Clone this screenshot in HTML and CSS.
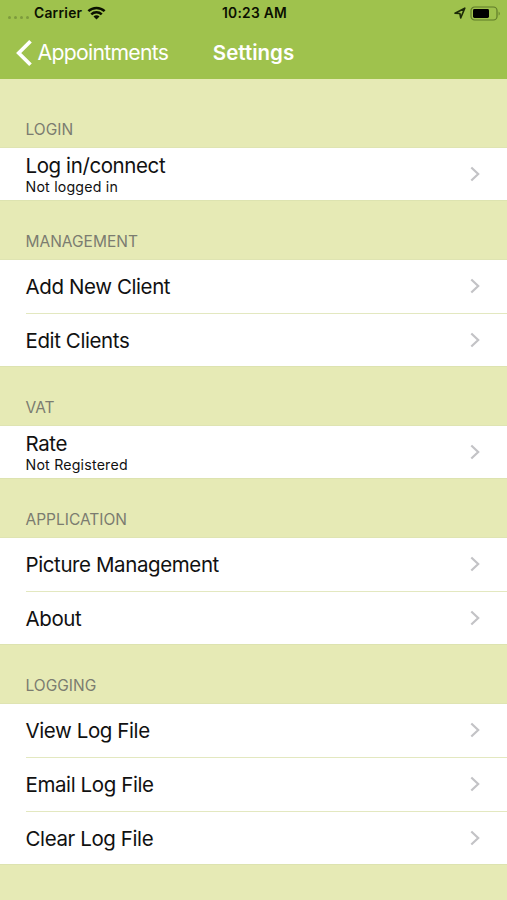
FILE: index.html
```html
<!DOCTYPE html>
<html lang="en">
<head>
    <meta charset="UTF-8">
    <title>Settings</title>
    <link rel="stylesheet" href="styles.css">
</head>
<body>
    <svg class="defs">
        <symbol id="chevron" viewBox="0 0 10 16">
            <path d="M1.3 1.5 8.2 8 1.3 14.5" fill="none" stroke="#c3c3c6" stroke-width="2.2"/>
        </symbol>
    </svg>
    <header>
        <div class="status">
            <div class="carrier">
                <span class="signal"><i></i><i></i><i></i><i></i></span>
                <span class="carrier-name">Carrier</span>
                <svg class="wifi" width="19" height="14" viewBox="0 0 20 15">
                    <g fill="none" stroke="#0b1000" stroke-width="2.7">
                        <path d="M1.3 5.6a12.4 12.4 0 0 1 17.4 0"/>
                        <path d="M4.4 8.9a8 8 0 0 1 11.2 0"/>
                    </g>
                    <path d="M6.8 11.2a4.5 4.5 0 0 1 6.4 0L10 14.4z" fill="#0b1000"/>
                </svg>
            </div>
            <div class="time">10:23 AM</div>
            <div class="power">
                <svg width="12" height="12" viewBox="0 0 12 12">
                    <path d="M1 6.3 10.8 1.2 6.7 10.9 5.9 6.5z" fill="none" stroke="#1c2a08" stroke-width="1.6" stroke-linejoin="round"/>
                </svg>
                <svg width="31" height="15" viewBox="0 0 31 15">
                    <rect x="1" y="1" width="26" height="13" rx="3.6" fill="none" stroke="#5f7a29" stroke-width="1.2"/>
                    <rect x="3" y="3" width="16" height="9" rx="1.4" fill="#000"/>
                    <path d="M28.7 5.4q2 2.1 0 4.2z" fill="#5f7a29"/>
                </svg>
            </div>
        </div>
        <nav>
            <a class="back">
                <svg width="17" height="28" viewBox="0 0 17 28">
                    <path d="M15.5 2.2 3.7 14l11.8 11.8" fill="none" stroke="#fff" stroke-width="3.7"/>
                </svg>
                <span>Appointments</span>
            </a>
            <h1>Settings</h1>
        </nav>
    </header>
    <main>
        <h2 class="first">LOGIN</h2>
        <ul>
            <li class="detail"><div><p>Log in/connect</p><small>Not logged in</small></div><svg class="chevron"><use href="#chevron"/></svg></li>
        </ul>
        <h2>MANAGEMENT</h2>
        <ul>
            <li><p>Add New Client</p><svg class="chevron"><use href="#chevron"/></svg></li>
            <li><p>Edit Clients</p><svg class="chevron"><use href="#chevron"/></svg></li>
        </ul>
        <h2>VAT</h2>
        <ul>
            <li class="detail"><div><p>Rate</p><small>Not Registered</small></div><svg class="chevron"><use href="#chevron"/></svg></li>
        </ul>
        <h2>APPLICATION</h2>
        <ul>
            <li><p>Picture Management</p><svg class="chevron"><use href="#chevron"/></svg></li>
            <li><p>About</p><svg class="chevron"><use href="#chevron"/></svg></li>
        </ul>
        <h2>LOGGING</h2>
        <ul>
            <li><p>View Log File</p><svg class="chevron"><use href="#chevron"/></svg></li>
            <li><p>Email Log File</p><svg class="chevron"><use href="#chevron"/></svg></li>
            <li><p>Clear Log File</p><svg class="chevron"><use href="#chevron"/></svg></li>
        </ul>
    </main>
</body>
</html>
```
FILE: styles.css
```css
* {
    box-sizing: border-box;
}
body {
    margin: 0;
    height: 900px;
    overflow: hidden;
    background: #e6eab5;
    font-family: Inter, "Liberation Sans", sans-serif;
    color: #111;
}
.defs {
    display: none;
}
header {
    height: 79px;
    background: #9fc24d;
}
.status {
    display: grid;
    grid-template-columns: 1fr auto 1fr;
    align-items: center;
    height: 26px;
    padding: 0 6px 0 8px;
    font-size: 13.8px;
    line-height: 16px;
    letter-spacing: 0.25px;
    font-weight: 600;
    color: #0b1000;
}
.carrier {
    display: flex;
    align-items: center;
}
.carrier-name,
.time {
    padding-bottom: 1px;
}
.signal {
    display: flex;
    gap: 3px;
    padding-top: 8px;
    width: 26px;
}
.signal i {
    width: 3px;
    height: 3px;
    border-radius: 50%;
    background: #7e9b3d;
}
.wifi {
    margin-left: 5px;
}
.power {
    display: flex;
    justify-content: flex-end;
    align-items: center;
    gap: 4px;
}
nav {
    display: grid;
    grid-template-columns: 1fr auto 1fr;
    align-items: center;
    height: 53px;
    padding: 0 15px;
    color: #fff;
}
.back {
    display: flex;
    align-items: center;
    gap: 5.5px;
    font-size: 21.2px;
    line-height: 26px;
    letter-spacing: -0.7px;
}
.back span {
    padding-bottom: 1px;
}
h1 {
    margin: 0;
    font-size: 20.5px;
    font-weight: 600;
}
h2 {
    display: flex;
    align-items: flex-end;
    height: 59px;
    margin: 0;
    padding: 0 25.5px 8px;
    font-size: 15.5px;
    line-height: 20px;
    letter-spacing: 0;
    font-weight: 400;
    color: #7b7c70;
}
h2.first {
    height: 69px;
}
ul {
    margin: 0;
    padding: 0;
    list-style: none;
    background: #fff;
    box-shadow: 0 -1px #dfe4b2, inset 0 -1px #dde3b0;
}
li {
    display: flex;
    align-items: center;
    justify-content: space-between;
    height: 53px;
    margin-left: 25.5px;
    padding-right: 27px;
}
li + li {
    height: 54px;
    border-top: 1px solid #e3e8c0;
}
p {
    margin: 0;
    font-size: 20.5px;
    line-height: 24px;
    letter-spacing: -0.4px;
}
.detail p {
    line-height: 23px;
}
small {
    display: block;
    padding-top: 1px;
    font-size: 14.2px;
    line-height: 17px;
    letter-spacing: 0.2px;
}
.chevron {
    width: 10px;
    height: 16px;
    margin-bottom: 2px;
}
```
